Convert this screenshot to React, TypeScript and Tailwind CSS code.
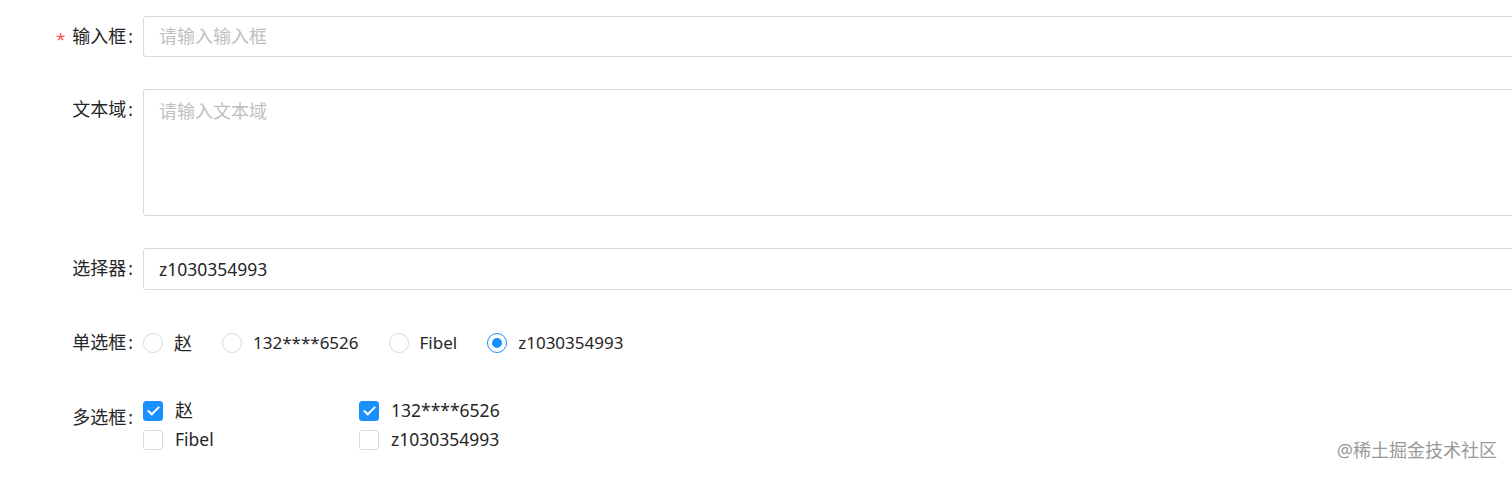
import React from "react";

const font = { fontFamily: '"Noto Sans", "Noto Sans CJK SC", sans-serif' };

function Label({ text, required }: { text: string; required?: boolean }) {
  return (
    <div className="w-[143px] shrink-0 pr-[10px] flex justify-end items-center h-[41px] text-[18px] text-[#262626]">
      {required && <span className="text-[#ff4d4f] mr-[7px] text-[17px] leading-none mt-[3px]">*</span>}
      <span>{text}</span>
      <span className="ml-[2px] text-[17.5px]">:</span>
    </div>
  );
}

function Radio({ label, checked, cjk }: { label: string; checked?: boolean; cjk?: boolean }) {
  return (
    <div className="flex items-center mr-[19px]">
      <span
        className={`w-[20px] h-[20px] rounded-full border bg-white flex items-center justify-center ${
          checked ? "border-[#1890ff]" : "border-[#d9d9d9]"
        }`}
      >
        {checked && <span className="w-[10px] h-[10px] rounded-full bg-[#1890ff]" />}
      </span>
      <span className={`px-[11px] text-[#262626] ${cjk ? "text-[18px]" : "text-[17px]"}`}>{label}</span>
    </div>
  );
}

function Checkbox({ label, checked, cjk }: { label: string; checked?: boolean; cjk?: boolean }) {
  return (
    <div className="flex items-center h-[29px] w-[216px]">
      <span
        className={`w-[20px] h-[20px] rounded-[3px] border flex items-center justify-center ${
          checked ? "bg-[#1890ff] border-[#1890ff]" : "bg-white border-[#d9d9d9]"
        }`}
      >
        {checked && (
          <svg width="13" height="10" viewBox="0 0 13 10" fill="none">
            <path d="M1.5 5.2 L4.8 8.3 L11.5 1.6" stroke="white" strokeWidth="2" strokeLinecap="square" />
          </svg>
        )}
      </span>
      <span className={`pl-[12px] text-[#262626] ${cjk ? "text-[18px]" : "text-[17.5px]"}`}>{label}</span>
    </div>
  );
}

export default function App() {
  return (
    <div className="relative w-full h-[478px] overflow-hidden bg-white" style={font}>
      <div className="w-[1600px] pt-[16px] flex flex-col gap-[32px]">
        <div className="flex">
          <Label text="输入框" required />
          <div className="flex-1 h-[41px] border border-[#d9d9d9] rounded-[3px] flex items-center pl-[15px] text-[18px] text-[#bfbfbf]">
            请输入输入框
          </div>
        </div>
        <div className="flex">
          <Label text="文本域" />
          <div className="flex-1 h-[127px] border border-[#d9d9d9] rounded-[3px] pl-[15px] pt-[6px] text-[18px] text-[#bfbfbf] leading-[30px]">
            请输入文本域
          </div>
        </div>
        <div className="flex">
          <Label text="选择器" />
          <div className="flex-1 h-[42px] border border-[#d9d9d9] rounded-[3px] flex items-center pl-[15px] text-[17.5px] text-[#262626]">
            z1030354993
          </div>
        </div>
        <div className="flex">
          <Label text="单选框" />
          <div className="flex items-center h-[42px]">
            <Radio label="赵" cjk />
            <Radio label="132****6526" />
            <Radio label="Fibel" />
            <Radio label="z1030354993" checked />
          </div>
        </div>
        <div className="flex">
          <div className="w-[143px] shrink-0 pr-[10px] flex justify-end items-start h-[41px] text-[18px] text-[#262626] pt-[8px]">
            <span>多选框</span>
            <span className="ml-[2px] text-[17.5px]">:</span>
          </div>
          <div className="grid grid-cols-[216px_216px]">
            <Checkbox label="赵" checked cjk />
            <Checkbox label="132****6526" checked />
            <Checkbox label="Fibel" />
            <Checkbox label="z1030354993" />
          </div>
        </div>
      </div>
      <div className="absolute right-[15px] top-[437px] text-[18px] text-[#999999]" style={{ textShadow: "0 0 2px #fff" }}>
        @稀土掘金技术社区
      </div>
    </div>
  );
}
